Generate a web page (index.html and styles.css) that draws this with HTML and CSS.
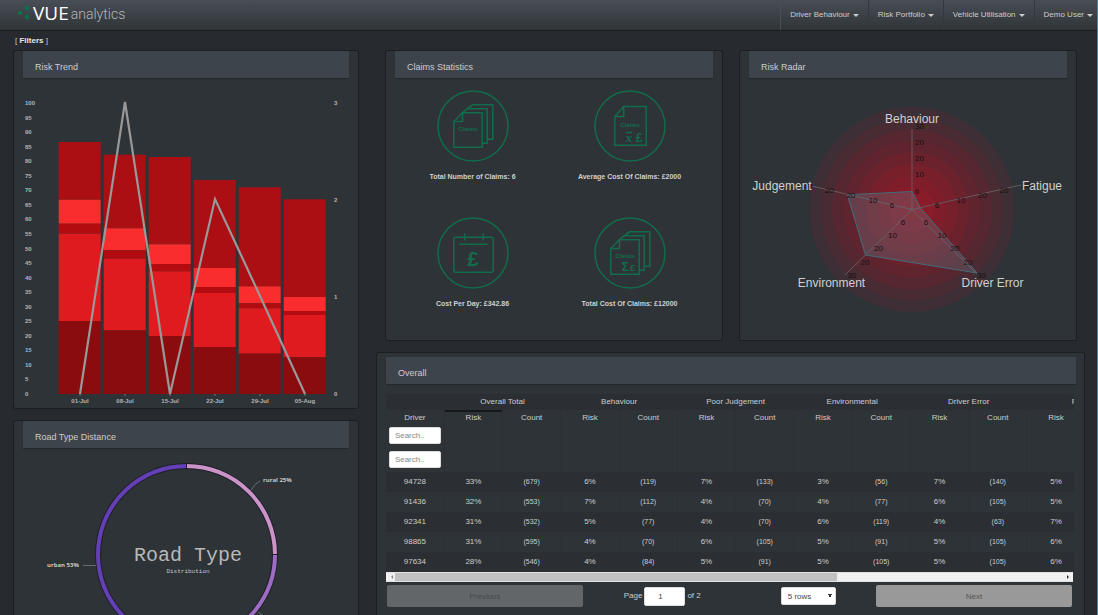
FILE: index.html
```html
<!DOCTYPE html>
<html lang="en">
<head>
<meta charset="utf-8">
<title>VUE analytics</title>
<link rel="stylesheet" href="styles.css">
</head>
<body>
<header class="navbar">
  <a class="brand" href="#">
    <svg class="brand-dots" viewBox="0 0 12 16" aria-hidden="true"><circle cx="3" cy="9" r="2.3"/><circle cx="10" cy="4" r="2.4"/><circle cx="10" cy="13" r="2.4"/></svg>
    <span class="brand-main">VUE</span><span class="brand-sub">analytics</span>
  </a>
  <nav class="menu">
    <a href="#">Driver Behaviour<i class="caret"></i></a>
    <a href="#">Risk Portfolio<i class="caret"></i></a>
    <a href="#">Vehicle Utilisation<i class="caret"></i></a>
    <a href="#">Demo User<i class="caret"></i></a>
  </nav>
</header>
<div class="filters">[ <a href="#">Filters</a> ]</div>
<main class="dashboard">
  <div class="column">
    <section class="panel">
      <h2>Risk Trend</h2>
      <svg class="chart" id="trend" viewBox="14 78 344 330" role="img" aria-label="Risk Trend"></svg>
    </section>
    <section class="panel">
      <h2>Road Type Distance</h2>
      <svg class="chart donut" viewBox="14 448 344 230" role="img" aria-label="Road Type Distance">
        <g fill="none" stroke="#1f1f2c" stroke-width="6"><circle cx="186.500" cy="554.500" r="88.500"/></g>
        <g fill="none" stroke-width="4">
          <circle cx="186.500" cy="554.500" r="88.500" pathLength="100" stroke="#643fb5" stroke-dasharray="53 47" transform="rotate(79.200 186.500 554.500)"/>
          <circle cx="186.500" cy="554.500" r="88.500" pathLength="100" stroke="#9e6dc3" stroke-dasharray="22 78"/>
          <circle cx="186.500" cy="554.500" r="88.500" pathLength="100" stroke="#cb93c8" stroke-dasharray="25 75" transform="rotate(-90 186.500 554.500)"/>
        </g>
        <path d="M186.500 463.500v6M272 554.500h6" stroke="#1f1f2c"/>
        <g class="leader"><path d="M251 490Q254 484 260 481"/><path d="M83 565.500H96"/><path d="M258 612Q264 617 270 618"/></g>
        <text class="slice" x="263" y="482">rural 25%</text>
        <text class="slice" x="47" y="567">urban 53%</text>
        <text class="slice" x="274" y="619">motorway 22%</text>
        <text class="donut-title" x="188" y="561">Road Type</text>
        <text class="donut-note" x="188" y="573">Distribution</text>
      </svg>
    </section>
  </div>
  <div class="column">
    <div class="top-row">
      <section class="panel">
        <h2>Claims Statistics</h2>
        <div class="claims">
          <figure>
            <svg viewBox="0 0 72 72" aria-hidden="true"><circle cx="36" cy="36" r="35"/><path d="M25.500 22.800H45.200V57.200H16.800V31.500ZM25.500 22.800V31.500H16.800M23 24.500L30 18.800H50.200V53.200H45.200M29 19.800L35.500 14.800H55.800V49.200H50.200"/><text x="31" y="41" class="doc-label">Claims</text></svg>
            <figcaption>Total Number of Claims: 6</figcaption>
          </figure>
          <figure>
            <svg viewBox="0 0 72 72" aria-hidden="true"><circle cx="36" cy="36" r="35"/><path d="M29.800 16.500H52.200V55.200H20.800V26.500ZM29.800 16.500V26.500H20.800M32 42.500H38"/><text x="36" y="37" class="doc-label">Claims</text><text x="35" y="52" class="mean">x</text><text x="45" y="52" class="sign-m">£</text></svg>
            <figcaption>Average Cost Of Claims: £2000</figcaption>
          </figure>
          <figure>
            <svg viewBox="0 0 72 72" aria-hidden="true"><circle cx="36" cy="36" r="35"/><rect x="16.800" y="20.200" width="39.400" height="35" rx="2"/><path d="M27.800 16.500V23.500M46.200 16.500V23.500M22.500 27.200H50.500"/><text x="36" y="49" class="sign-l">£</text></svg>
            <figcaption>Cost Per Day: £342.86</figcaption>
          </figure>
          <figure>
            <svg viewBox="0 0 72 72" aria-hidden="true"><circle cx="36" cy="36" r="35"/><path d="M25.500 22.800H45.200V57.200H16.800V31.500ZM25.500 22.800V31.500H16.800M23 24.500L30 18.800H50.200V53.200H45.200M29 19.800L35.500 14.800H55.800V49.200H50.200"/><text x="31" y="41" class="doc-label">Claims</text><text x="31" y="54" class="sign-m">Σ</text><text x="38.500" y="54" class="sign-s">£</text></svg>
            <figcaption>Total Cost Of Claims: £12000</figcaption>
          </figure>
        </div>
      </section>
      <section class="panel">
        <h2>Risk Radar</h2>
        <svg class="chart" id="radar" viewBox="740 78 336 262" role="img" aria-label="Risk Radar"></svg>
      </section>
    </div>
    <section class="panel overall">
      <h2>Overall</h2>
      <div class="table-wrap">
        <table>
          <thead>
            <tr><th></th><th colspan="2">Overall Total</th><th colspan="2">Behaviour</th><th colspan="2">Poor Judgement</th><th colspan="2">Environmental</th><th colspan="2">Driver Error</th><th colspan="2">Fatigue</th></tr>
            <tr><th>Driver</th><th class="sorted">Risk</th><th>Count</th><th>Risk</th><th>Count</th><th>Risk</th><th>Count</th><th>Risk</th><th>Count</th><th>Risk</th><th>Count</th><th>Risk</th><th>Count</th></tr>
            <tr class="search"><td><input type="text" placeholder="Search.." aria-label="Search driver"></td><td></td><td></td><td></td><td></td><td></td><td></td><td></td><td></td><td></td><td></td><td></td><td></td></tr>
            <tr class="search"><td><input type="text" placeholder="Search.." aria-label="Search driver number"></td><td></td><td></td><td></td><td></td><td></td><td></td><td></td><td></td><td></td><td></td><td></td><td></td></tr>
          </thead>
          <tbody id="rows"></tbody>
        </table>
      </div>
      <div class="scroll"><i class="arrow left"></i><div class="track"><div class="thumb"></div></div><i class="arrow right"></i></div>
      <div class="pager">
        <button type="button" class="previous" disabled>Previous</button>
        <div class="pages">
          <div class="current"><label for="page">Page</label><input id="page" type="text" value="1"><span>of 2</span></div>
          <div class="size"><select aria-label="Rows per page"><option>5 rows</option><option>10 rows</option></select></div>
        </div>
        <button type="button" class="next">Next</button>
      </div>
    </section>
  </div>
</main>
<script src="charts.js"></script>
</body>
</html>
```
FILE: styles.css
```css
* { box-sizing: border-box; }
body {
  margin: 0;
  height: 100vh;
  overflow: hidden;
  background: #272a2f;
  border-right: 1px solid #1c95cc;
  color: #cccccc;
  font: 8px/12px "Liberation Sans", Arial, sans-serif;
}
a { color: inherit; text-decoration: none; }

.navbar {
  display: flex;
  justify-content: space-between;
  height: 31px;
  background: linear-gradient(#484e56, #2f3437);
  border-bottom: 1px solid #1b1e20;
}
.brand { display: flex; align-items: flex-start; padding: 0 0 0 16px; height: 26px; }
.brand-dots { width: 12px; height: 16px; margin: 4px 4px 0 1px; fill: #0f6e4b; }
.brand-main { font: 19px/26px "Open Sans", sans-serif; color: #fff; }
.brand-sub { font: 300 14px/28px Roboto, sans-serif; color: #b4b7ba; margin-left: 2px; }
.menu { display: flex; }
.menu a {
  display: flex;
  align-items: center;
  gap: 3px;
  padding: 0 9px;
  border-left: 1px solid #4a4f54;
}
.menu a + a { border-left-color: #35393d; }
.menu a:last-child { padding-right: 4px; }
.caret { border: 3px solid transparent; border-top-color: #cccccc; border-bottom: 0; }

.filters { padding: 4px 15px; }
.filters a { font-weight: bold; color: #e6e6e6; }

.dashboard {
  display: grid;
  grid-template-columns: 344fr 707fr;
  gap: 19px;
  padding: 0 13px 0 14px;
}
.column { display: flex; flex-direction: column; gap: 13px; min-width: 0; }
.top-row { display: grid; grid-template-columns: 1fr 1fr; gap: 18px; padding: 0 8px 0 9px; }
.panel {
  background: #2e3337;
  border-radius: 2px;
  box-shadow: 0 0 0 1px #1c1f22;
}
.panel h2 {
  margin: 0 9px;
  padding: 8px 12px 3px;
  font-size: 9px;
  line-height: 16px;
  font-weight: normal;
  background: #3e444c;
  border-radius: 1px;
  box-shadow: 0 1px 1px #222629;
}
.chart { display: block; width: 100%; }

.axis { font: bold 6px "Liberation Sans", sans-serif; fill: #b4b4b4; }
.axis-x { text-anchor: middle; }
.slice { font: bold 6px "Open Sans", sans-serif; fill: #c8c8c8; }
.leader { fill: none; stroke: #666b70; }
.donut-title { font: 20px "Liberation Mono", monospace; fill: #b8b8b8; text-anchor: middle; }
.donut-note { font: 6px "Liberation Mono", monospace; fill: #c8c8c8; text-anchor: middle; }
.radar-name { font: 12px "Liberation Sans", sans-serif; fill: #d0d0d0; text-anchor: middle; }
.radar-value { font: 8px "Liberation Sans", sans-serif; fill: #161012; text-anchor: middle; }

.claims {
  display: grid;
  grid-template-columns: 1fr 1fr;
  row-gap: 35px;
  padding: 12px 14px 30px 8px;
}
.claims figure { margin: 0; text-align: center; }
.claims svg { display: block; width: 72px; height: 72px; margin: 0 auto 9px; fill: none; stroke: #116c4b; stroke-width: 1.5; }
.claims figcaption { font-size: 7px; line-height: 11px; font-weight: bold; color: #d0d0d0; }
.claims text { fill: #116c4b; stroke: none; text-anchor: middle; font-family: "Liberation Sans", sans-serif; font-weight: bold; }
.claims .doc-label { font-size: 6px; }
.claims .mean { font: italic bold 13px "Liberation Serif", serif; }
.claims .sign-s { font-size: 9px; }
.claims .sign-m { font-size: 12px; }
.claims .sign-l { font-size: 21px; }

.overall { padding: 4px 8px 20px 9px; }
.overall h2 { margin: 0; }
.table-wrap { overflow: hidden; margin: 10px 2px 0 0; }
table { width: 758px; table-layout: fixed; border-collapse: collapse; }
th, td { padding: 0; height: 16px; text-align: center; font-weight: normal; border-right: 1px solid #2c3034; }
thead tr:first-child { background: #2b2f33; }
th.sorted { box-shadow: inset 0 2px #15171a; }
.search td { height: 24px; padding-top: 1px; vertical-align: top; }
.search + .search td { height: 22px; }
.search input { display: block; width: 52px; margin: 0 auto; padding: 0 5px; height: 17px; }
input, select {
  font: 8px "Liberation Sans", Arial, sans-serif;
  color: #444;
  background: #fff;
  border: 1px solid #ddd;
  border-radius: 2px;
}
input::placeholder { color: #858585; }
tbody td { height: 20px; }
tbody tr:nth-child(odd) { background: #2b2f33; }
tbody td:nth-child(odd):not(:first-child) { font-size: 7px; }

.scroll { display: flex; align-items: center; height: 10px; margin-right: 3px; background: #f0f0f0; border: solid #e2e2e2; border-width: 1px 0; }
.track { flex: 1; height: 8px; }
.thumb { width: 66%; height: 8px; background: #c1c1c1; }
.arrow { width: 9px; text-align: center; }
.arrow::before { content: ""; display: block; width: 2px; margin: 0 auto; border: 2px solid transparent; }
.arrow.left::before { border-right-color: #888; border-left: 0; }
.arrow.right::before { border-left-color: #333; border-right: 0; }

.pager { display: grid; grid-template-columns: 1fr 293px 1fr; padding: 3px 4px 0 1px; }
.pager button { height: 22px; border: 0; border-radius: 2px; font: 8px "Liberation Sans", Arial, sans-serif; color: #555; background: #999; }
.pager .previous { background: #626669; color: #45494d; }
.pages { display: grid; grid-template-columns: 1fr 1fr; align-items: center; }
.pages > div { display: flex; align-items: center; justify-content: center; gap: 2px; }
.pages .current { padding-left: 12px; }
.pages .size { padding-left: 11px; }
.pages input { width: 41px; height: 19px; padding: 0 9px 0 0; text-align: center; }
select {
  appearance: none;
  width: 55px;
  height: 18px;
  padding: 0 6px;
  background:
    linear-gradient(to top right, transparent 50%, #333 50%) 46px 6px / 2px 4px no-repeat,
    linear-gradient(to top left, transparent 50%, #333 50%) 48px 6px / 2px 4px no-repeat,
    #fff;
}
```
FILE: charts.js
```js
function add(parent, name, attributes, text) {
  const node = document.createElementNS("http://www.w3.org/2000/svg", name);
  for (const key in attributes) node.setAttribute(key, attributes[key]);
  if (text !== undefined) node.textContent = text;
  parent.appendChild(node);
}

// Stacked risk bars with the claims line on the right-hand axis
const trend = document.getElementById("trend");
const base = 394;
const shades = ["#ab0f13", "#f92d2d", "#b30c10", "#e01b1f", "#8b0c0f"];
const weeks = [
  ["01-Jul", 142, 199.7, 223.7, 233.7, 321],
  ["08-Jul", 154.7, 228.3, 250.3, 258.7, 330.5],
  ["15-Jul", 157, 244.3, 264, 271.3, 336],
  ["22-Jul", 180, 268, 287, 293, 347],
  ["29-Jul", 187.3, 286.3, 303.3, 308.3, 353.7],
  ["05-Aug", 199.3, 297, 311, 315, 357.3]
];
weeks.forEach(([label, ...tops], i) => {
  const x = 58.7 + 45 * i;
  tops.forEach((top, j) => {
    add(trend, "rect", { x, y: top, width: 42, height: (tops[j + 1] || base) - top, fill: shades[j] });
  });
  add(trend, "path", { d: `M${80 + 45 * i} ${base}v2`, stroke: "#777" });
  add(trend, "text", { x: 80 + 45 * i, y: 403, class: "axis axis-x" }, label);
});
for (let v = 0; v <= 100; v += 5) {
  add(trend, "text", { x: 25, y: base + 2 - v * 2.91, class: "axis" }, v);
}
for (let v = 0; v <= 3; v++) {
  add(trend, "text", { x: 334, y: base + 2 - v * 97, class: "axis" }, v);
}
add(trend, "polyline", { points: "80,394 125,102 170,394 215,199 260,296 305,394", fill: "none", stroke: "#999", "stroke-width": 2.2 });

// Radar
const radar = document.getElementById("radar");
["#3d2f35", "#482b33", "#562730", "#60242e", "#6b222d", "#77202b", "#801d2a", "#8a1b29", "#921926"].forEach((fill, i) => {
  add(radar, "circle", { cx: 912, cy: 209.5, r: 102.6 - 11.4 * i, fill });
});
[[912, 129], [1021, 185], [977, 274], [845, 275], [812, 186]].forEach(([x, y]) => {
  add(radar, "path", { d: `M912 209.500L${x} ${y}`, stroke: "#67595b" });
});
add(radar, "polygon", { points: "912,191.5 920.500,208 977,273 865.500,255 847.300,194.800", fill: "#667280", "fill-opacity": 0.36, stroke: "#456b7a" });
[[919.5, 129, 30], [919.5, 145, 20], [919.5, 161, 20], [919.5, 177, 10], [917, 193.5, 6],
 [937, 207.5, 6], [961, 203, 10], [982.5, 198, 20], [1004, 192.5, 20], [1026, 188, 30],
 [926, 225, 6], [942, 238, 10], [955, 251, 20], [968, 264.5, 20], [981.5, 278, 30],
 [903, 225, 6], [892.5, 238, 10], [878.5, 251, 20], [865, 264.5, 20], [852, 278, 30],
 [892, 207.5, 6], [873, 203, 10], [851, 198, 20], [829.5, 192.5, 20], [808, 188, 30]
].forEach(([x, y, v]) => add(radar, "text", { x, y, class: "radar-value" }, v));
[["Behaviour", 912, 122.5], ["Fatigue", 1042, 190], ["Driver Error", 992.5, 286.5], ["Environment", 831.5, 286.5], ["Judgement", 782, 190]]
  .forEach(([name, x, y]) => add(radar, "text", { x, y, class: "radar-name" }, name));

// Driver table
const drivers = [
  [94728, 33, 679, 6, 119, 7, 133, 3, 56, 7, 140, 5, 98],
  [91436, 32, 553, 7, 112, 4, 70, 4, 77, 6, 105, 5, 84],
  [92341, 31, 532, 5, 77, 4, 70, 6, 119, 4, 63, 7, 119],
  [98865, 31, 595, 4, 70, 6, 105, 5, 91, 5, 105, 6, 105],
  [97634, 28, 546, 4, 84, 5, 91, 5, 105, 5, 105, 6, 105]
];
const rows = document.getElementById("rows");
drivers.forEach(values => {
  const row = rows.insertRow();
  values.forEach((v, i) => {
    row.insertCell().textContent = i === 0 ? v : i % 2 ? v + "%" : "(" + v + ")";
  });
});
```
